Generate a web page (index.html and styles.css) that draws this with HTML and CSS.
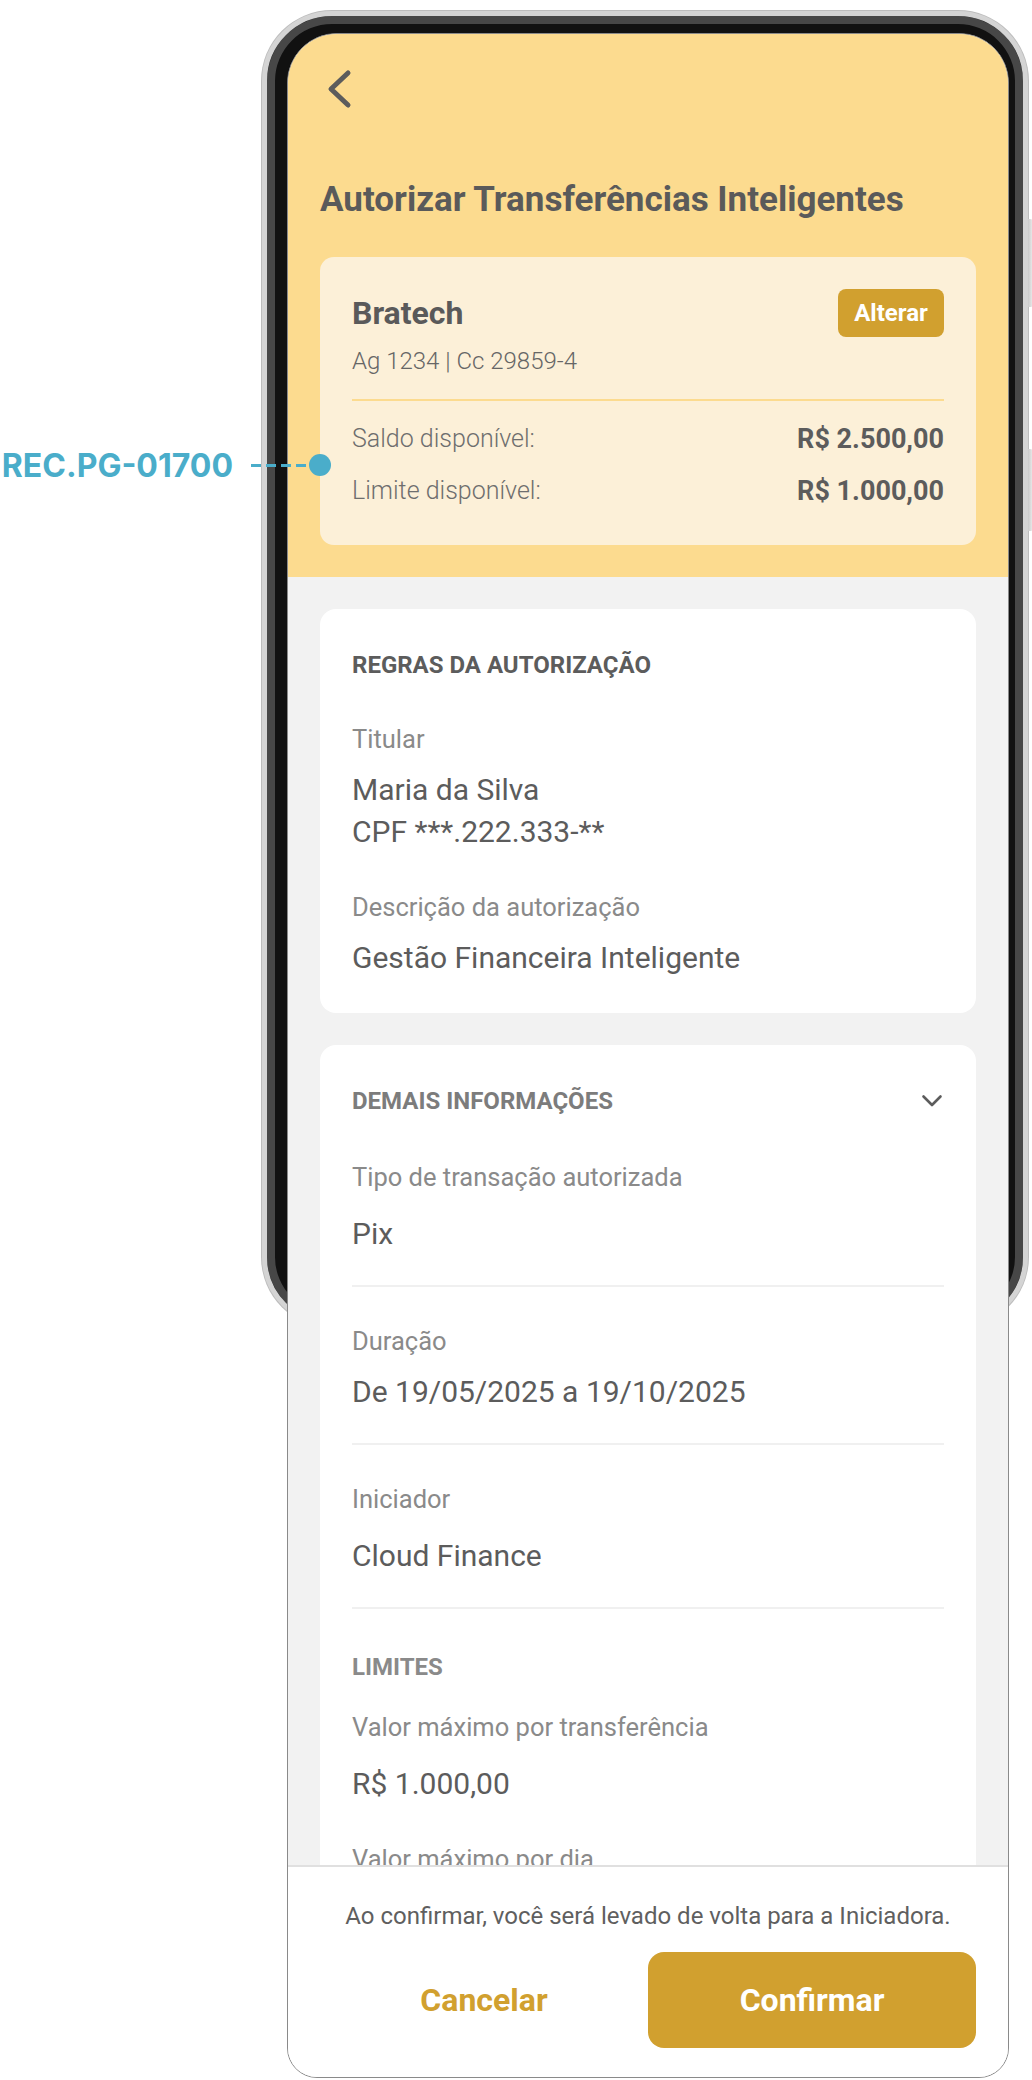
FILE: index.html
```html
<!DOCTYPE html>
<html lang="pt-BR">

<head>
  <meta charset="UTF-8" />
  <meta name="viewport" content="width=device-width, initial-scale=1.0" />
  <title>Autorizar Transferências Inteligentes</title>
  <link rel="stylesheet" href="styles.css">
</head>

<body>
  <div class="stage">

    <!-- Callout -->
    <div class="callout">
      <span class="callout-code">REC.PG-01700</span>
      <span class="callout-line"></span>
      <span class="callout-dot"></span>
    </div>

    <div class="phone">
      <span class="side-key key-top"></span>
      <span class="side-key key-bottom"></span>

      <div class="screen">
        <header class="hero">
          <div class="topbar">
            <svg class="back" width="40" height="40" viewBox="0 0 40 40">
              <path d="M28 4 L11 20 L28 36" fill="none" stroke="#5c5c5c" stroke-width="5" stroke-linecap="round" stroke-linejoin="round" />
            </svg>
          </div>

          <h1 class="page-title">Autorizar Transferências Inteligentes</h1>

          <div class="account">
            <div class="account-head">
              <span class="bank">Bratech</span>
              <button class="btn-small">Alterar</button>
            </div>
            <div class="account-number">Ag 1234 | Cc 29859-4</div>
            <div class="account-divider"></div>
            <div class="balance-row">
              <span>Saldo disponível:</span>
              <strong>R$ 2.500,00</strong>
            </div>
            <div class="balance-row next">
              <span>Limite disponível:</span>
              <strong>R$ 1.000,00</strong>
            </div>
          </div>
        </header>

        <main class="content">
          <section class="card">
            <h2 class="card-title">REGRAS DA AUTORIZAÇÃO</h2>
            <div class="field">
              <div class="label">Titular</div>
              <div class="value">Maria da Silva<br>CPF ***.222.333-**</div>
            </div>
            <div class="field">
              <div class="label">Descrição da autorização</div>
              <div class="value">Gestão Financeira Inteligente</div>
            </div>
          </section>

          <section class="card">
            <div class="card-head">
              <h2 class="card-title muted">DEMAIS INFORMAÇÕES</h2>
              <svg width="24" height="24" viewBox="0 0 24 24">
                <path d="M3.5 7.5 L12 16 L20.5 7.5" fill="none" stroke="#5c5c5c" stroke-width="2.6" stroke-linecap="round" stroke-linejoin="round" />
              </svg>
            </div>
            <div class="field">
              <div class="label">Tipo de transação autorizada</div>
              <div class="value loose">Pix</div>
            </div>
            <div class="divider"></div>
            <div class="field">
              <div class="label">Duração</div>
              <div class="value">De 19/05/2025 a 19/10/2025</div>
            </div>
            <div class="divider"></div>
            <div class="field">
              <div class="label">Iniciador</div>
              <div class="value loose">Cloud Finance</div>
            </div>
            <div class="divider"></div>
            <h3 class="subhead">LIMITES</h3>
            <div class="field">
              <div class="label">Valor máximo por transferência</div>
              <div class="value loose">R$ 1.000,00</div>
            </div>
            <div class="field">
              <div class="label">Valor máximo por dia</div>
              <div class="value loose">R$ 5.000,00</div>
            </div>
          </section>
        </main>

        <footer class="footer">
          <p class="footer-note">Ao confirmar, você será levado de volta para a Iniciadora.</p>
          <div class="actions">
            <button class="btn btn-text">Cancelar</button>
            <button class="btn btn-primary">Confirmar</button>
          </div>
        </footer>
      </div>
    </div>
  </div>
</body>

</html>
```

FILE: styles.css
```css
/* Base */
body {
  margin: 0;
  background: #ffffff;
  font-family: 'Roboto', 'Liberation Sans', sans-serif;
  color: #5c5c5c;
}

.stage {
  position: relative;
  width: 1032px;
  height: 2080px;
  overflow: hidden;
}

/* Callout on the left */
.callout {
  position: absolute;
  top: 445px;
  right: 701px;
  height: 40px;
  display: flex;
  align-items: center;
  z-index: 5;
}

.callout-code {
  font-family: 'Inter', 'Roboto', sans-serif;
  font-weight: 700;
  font-size: 32px;
  color: #4aadca;
  white-space: nowrap;
}

.callout-line {
  width: 58px;
  height: 3px;
  margin-left: 18px;
  background: repeating-linear-gradient(90deg, #4aadca 0 10px, transparent 10px 15px);
}

.callout-dot {
  width: 22px;
  height: 22px;
  border-radius: 50%;
  background: #4aadca;
}

/* Phone frame */
.phone {
  position: relative;
  box-sizing: border-box;
  width: 766px;
  height: 1316px;
  margin: 11px 0 0 262px;
  padding: 17px 0 0 20px;
  border: 5px solid #d4d4d4;
  border-radius: 70px;
  background: #111111;
  box-shadow: inset 0 0 0 8px #474747, 0 0 0 1px #bdbdbd;
}

.side-key {
  position: absolute;
  right: -10px;
  width: 5px;
  border-radius: 0 3px 3px 0;
  background: linear-gradient(90deg, #c9c9c9, #eeeeee);
}

.key-top {
  top: 203px;
  height: 88px;
}

.key-bottom {
  top: 433px;
  height: 82px;
}

/* Screen */
.screen {
  box-sizing: border-box;
  width: 722px;
  height: 2045px;
  border: 1px solid #8a8a8a;
  border-radius: 50px 50px 30px 30px;
  background: #f2f2f2;
  overflow: hidden;
  display: flex;
  flex-direction: column;
}

/* Yellow header */
.hero {
  background: #fcdb8f;
  padding: 0 32px 32px;
}

.topbar {
  padding-top: 35px;
  height: 40px;
}

.back {
  display: block;
}

.page-title {
  margin: 71px 0 0;
  font-size: 35px;
  line-height: 40px;
  font-weight: 700;
  color: #5a5a5a;
}

.account {
  margin-top: 37px;
  padding: 32px 32px 38px;
  background: #fcf0d8;
  border-radius: 14px;
}

.account-head {
  display: flex;
  justify-content: space-between;
  align-items: center;
  height: 48px;
}

.bank {
  font-size: 32px;
  font-weight: 700;
  color: #5a5a5a;
}

.btn-small {
  width: 106px;
  height: 48px;
  border: none;
  border-radius: 8px;
  background: #d1a02f;
  color: #ffffff;
  font-family: inherit;
  font-size: 24px;
  font-weight: 700;
}

.account-number {
  margin-top: 8px;
  font-size: 24px;
  line-height: 32px;
  font-weight: 300;
  color: #666666;
}

.account-divider {
  margin-top: 22px;
  height: 2px;
  background: #fcdb8f;
}

.balance-row {
  display: flex;
  justify-content: space-between;
  align-items: center;
  margin-top: 22px;
  line-height: 32px;
}

.balance-row.next {
  margin-top: 20px;
}

.balance-row span {
  font-size: 25px;
  font-weight: 300;
  color: #6e6e6e;
}

.balance-row strong {
  font-size: 27px;
  font-weight: 700;
  color: #5c5c5c;
}

/* Scrollable content */
.content {
  flex: 1;
  min-height: 0;
  overflow: hidden;
  padding: 32px 32px 0;
}

.card {
  background: #ffffff;
  border-radius: 16px;
  padding: 40px 32px 34px;
}

.card + .card {
  margin-top: 32px;
}

.card-head {
  display: flex;
  justify-content: space-between;
  align-items: center;
}

.card-title {
  margin: 0;
  font-size: 24px;
  line-height: 32px;
  font-weight: 700;
  color: #5c5c5c;
}

.card-title.muted {
  color: #7c7c7c;
}

.field {
  margin-top: 38px;
}

.card-title + .field {
  margin-top: 42px;
}

.card-head + .field {
  margin-top: 44px;
}

.label {
  font-size: 25.5px;
  line-height: 32px;
  color: #8a8a8a;
}

.value {
  margin-top: 14px;
  font-size: 30px;
  line-height: 42px;
  color: #5c5c5c;
}

.value.loose {
  margin-top: 20px;
}

.divider {
  margin-top: 30px;
  height: 2px;
  background: #f0f0f0;
}

.divider + .field {
  margin-top: 38px;
}

.subhead {
  margin: 42px 0 0;
  font-size: 24px;
  line-height: 32px;
  font-weight: 700;
  color: #8a8a8a;
}

.subhead + .field {
  margin-top: 28px;
}

/* Footer */
.footer {
  background: #ffffff;
  border-top: 2px solid #e0e0e0;
  padding: 33px 32px 29px;
}

.footer-note {
  margin: 0;
  text-align: center;
  font-size: 24px;
  line-height: 32px;
  color: #5f5f5f;
}

.actions {
  display: flex;
  margin-top: 20px;
}

.btn {
  flex: 1;
  height: 96px;
  border: none;
  border-radius: 16px;
  font-family: inherit;
  font-size: 32px;
  font-weight: 700;
}

.btn-text {
  background: transparent;
  color: #d1a02f;
}

.btn-primary {
  background: #d1a02f;
  color: #ffffff;
}
```
